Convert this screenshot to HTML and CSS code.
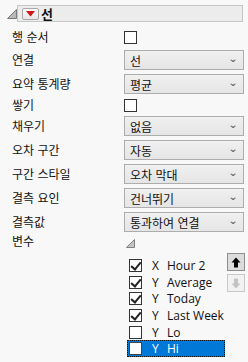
FILE: index.html
```html
<!DOCTYPE html>
<html lang="ko">
<head>
<meta charset="utf-8">
<link rel="stylesheet" href="styles.css">
</head>
<body>
<div class="panel">
  <div class="header">
    <svg class="disc" width="10" height="10" viewBox="0 0 10 10"><path d="M9.5 0.5 L9.5 9.5 L0.5 9.5 Z" fill="#b8b8b8" stroke="#7a7a7a" stroke-width="1"/></svg>
    <div class="titlebox">
      <span class="redbtn"><svg width="9" height="6" viewBox="0 0 9 6"><path d="M0 0 L9 0 L4.5 5.5 Z" fill="#d4141a"/></svg></span>
      <span class="title">선</span>
    </div>
  </div>
  <div class="form">
    <div class="label r-chk1">행 순서</div><div class="ctl r-chk1"><span class="cb"></span></div>
    <div class="label r-dd">연결</div><div class="ctl r-dd"><div class="dd"><span>선</span><span class="chev">⌄</span></div></div>
    <div class="label r-dd">요약 통계량</div><div class="ctl r-dd"><div class="dd"><span>평균</span><span class="chev">⌄</span></div></div>
    <div class="label r-chk2">쌓기</div><div class="ctl r-chk2"><span class="cb"></span></div>
    <div class="label r-dd">채우기</div><div class="ctl r-dd"><div class="dd"><span>없음</span><span class="chev">⌄</span></div></div>
    <div class="label r-dd">오차 구간</div><div class="ctl r-dd"><div class="dd"><span>자동</span><span class="chev">⌄</span></div></div>
    <div class="label r-dd">구간 스타일</div><div class="ctl r-dd"><div class="dd"><span>오차 막대</span><span class="chev">⌄</span></div></div>
    <div class="label r-dd">결측 요인</div><div class="ctl r-dd"><div class="dd"><span>건너뛰기</span><span class="chev">⌄</span></div></div>
    <div class="label r-dd">결측값</div><div class="ctl r-dd"><div class="dd"><span>통과하여 연결</span><span class="chev">⌄</span></div></div>
    <div class="label r-var">변수</div><div class="ctl r-var"><svg width="9" height="9" viewBox="0 0 9 9"><path d="M8.5 0.5 L8.5 8.5 L0.5 8.5 Z" fill="#c4c4c4" stroke="#808080" stroke-width="1"/></svg></div>
  </div>
  <div class="varwrap">
    <ul class="varlist">
      <li><span class="cb checked"></span><span class="axis">X</span><span>Hour 2</span></li>
      <li><span class="cb checked"></span><span class="axis">Y</span><span>Average</span></li>
      <li><span class="cb checked"></span><span class="axis">Y</span><span>Today</span></li>
      <li><span class="cb checked"></span><span class="axis">Y</span><span>Last Week</span></li>
      <li><span class="cb"></span><span class="axis">Y</span><span>Lo</span></li>
      <li class="sel"><span class="cb"></span><span class="axis">Y</span><span>Hi</span></li>
    </ul>
    <div class="btns">
      <span class="abtn up"><svg width="10" height="11" viewBox="0 0 10 11"><path d="M5 0.5 L9.5 5.5 L7 5.5 L7 10.5 L3 10.5 L3 5.5 L0.5 5.5 Z" fill="#000"/></svg></span>
      <span class="abtn down"><svg width="10" height="11" viewBox="0 0 10 11"><path d="M5 10.5 L9.5 5.5 L7 5.5 L7 0.5 L3 0.5 L3 5.5 L0.5 5.5 Z" fill="#c4c4c4"/></svg></span>
    </div>
  </div>
</div>
</body>
</html>
```
FILE: styles.css
```css
html, body {
  margin: 0;
  padding: 0;
  background: #f8f8f8;
}
body {
  width: 248px;
  height: 362px;
  overflow: hidden;
  font-family: "Noto Sans CJK KR", "Noto Sans", sans-serif;
  font-size: 12px;
  color: #111;
}
.panel {
  padding-top: 4px;
}
.header {
  display: flex;
  align-items: center;
  height: 19px;
}
.disc {
  margin-left: 7px;
  margin-top: 1px;
}
.titlebox {
  margin-left: 0;
  width: 226px;
  height: 17px;
  box-sizing: border-box;
  border: 1px solid #c6c6c6;
  background: #ececec;
  display: flex;
  align-items: center;
}
.redbtn {
  margin-left: 4px;
  width: 17px;
  height: 12px;
  box-sizing: border-box;
  border: 1px solid #a9a9a9;
  border-radius: 2px;
  background: linear-gradient(#fafafa, #e6e6e6);
  display: flex;
  align-items: center;
  justify-content: center;
}
.redbtn svg { display: block; }
.title {
  margin-left: 2px;
  font-weight: bold;
  font-size: 13px;
  line-height: 15px;
}
.form {
  display: grid;
  grid-template-columns: 112px 120px;
  row-gap: 4px;
  padding-left: 12px;
  margin-top: 5px;
}
.label, .ctl {
  display: flex;
  align-items: center;
}
.label {
  line-height: 14px;
}
.r-chk1 { height: 18px; }
.r-chk2 { height: 14px; }
.r-dd { height: 20px; }
.r-var { height: 12px; }
.r-var.label { align-items: flex-end; height: 12px; }
.ctl.r-var svg { margin-left: 2px; margin-top: 2px; display: block; }
.cb {
  display: inline-block;
  width: 13px;
  height: 13px;
  box-sizing: border-box;
  border: 1px solid #333;
  background: #fff;
  position: relative;
}
.cb.checked::after {
  content: "";
  position: absolute;
  left: 3px;
  top: 0px;
  width: 4px;
  height: 8px;
  border: solid #222;
  border-width: 0 2px 2px 0;
  transform: rotate(40deg);
}
.dd {
  width: 120px;
  height: 20px;
  box-sizing: border-box;
  border: 1px solid #adadad;
  background: linear-gradient(#f0f0f0, #e5e5e5);
  display: flex;
  align-items: center;
  justify-content: space-between;
  padding: 0 6px 0 5px;
}
.chev {
  font-size: 10px;
  color: #555;
  line-height: 10px;
  margin-top: -5px;
  transform: scaleX(1.2);
}
.varwrap {
  display: flex;
  padding-left: 127px;
  margin-top: 5px;
}
.varlist {
  list-style: none;
  margin: 4px 0 0 0;
  padding: 0;
  width: 98px;
  font-family: "Open Sans", "Noto Sans", sans-serif;
  font-size: 12px;
}
.varlist li {
  height: 16.7px;
  display: flex;
  align-items: center;
  box-sizing: border-box;
  padding-left: 2px;
  color: #111;
}
.varlist .axis {
  margin-left: 10px;
  width: 15px;
}
.varlist li.sel {
  background: #0078d7;
  color: #fff;
  outline: 1px dotted #111;
  outline-offset: -1px;
}
.varlist li.sel .cb { border-color: #444; }
.btns {
  display: flex;
  flex-direction: column;
  gap: 3px;
  margin-left: 2px;
}
.abtn {
  width: 18px;
  height: 18px;
  box-sizing: border-box;
  display: flex;
  align-items: center;
  justify-content: center;
}
.abtn.up {
  border: 1px solid #8e8e8e;
  background: #dcdcdc;
}
.abtn.down {
  border: 1px solid #c8c8c8;
  background: #f2f2f2;
}
.abtn svg { display: block; }
```
